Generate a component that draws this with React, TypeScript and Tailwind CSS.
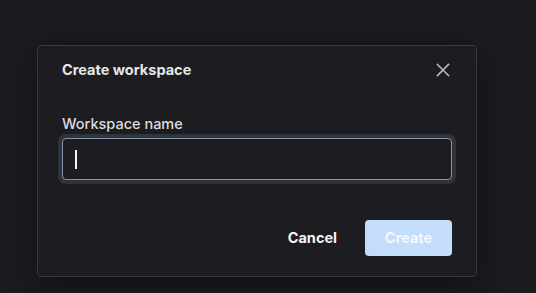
import React from "react";

export default function App() {
  return (
    <div
      className="w-[536px] h-[293px] bg-[#1b1b1f] overflow-hidden"
      style={{ fontFamily: "Inter, 'Open Sans', sans-serif" }}
    >
      <div className="pt-[45px] pl-[37px]">
        <div className="w-[440px] h-[232px] box-border border border-[#38383d] rounded-[4px] bg-[#1d1d21] shadow-[0_10px_30px_rgba(0,0,0,0.35)] px-[24px] pt-[12px] flex flex-col">
          <div className="h-[24px] flex items-center justify-between">
            <span className="text-[14.5px] font-bold text-[#e6e6e8]">
              Create workspace
            </span>
            <svg
              width="24"
              height="24"
              viewBox="0 0 24 24"
              className="mr-[-3px]"
              fill="none"
              stroke="#b8b8bc"
              strokeWidth="1.6"
              strokeLinecap="square"
            >
              <path d="M6.5 6.5 L17.5 17.5 M17.5 6.5 L6.5 17.5" />
            </svg>
          </div>
          <div className="mt-[32px] h-[20px] flex items-center text-[14.5px] font-medium text-[#dcdcdf]">
            Workspace name
          </div>
          <div className="mt-[4px] h-[42px] box-border border border-[#8797ab] rounded-[4px] bg-[#1d1d21] shadow-[0_0_0_4px_#2f343b] flex items-center pl-[12px]">
            <div className="w-[1.5px] h-[19px] bg-[#f2f2f2]" />
          </div>
          <div className="mt-[40px] flex justify-end items-center gap-[12px]">
            <button className="h-[36px] px-[16px] text-[14.5px] font-bold text-[#f4f4f6] bg-transparent rounded-[4px]">
              Cancel
            </button>
            <button className="h-[36px] w-[87px] text-[14.5px] font-bold text-[#f3f8ff] bg-[#c3ddfb] rounded-[4px]">
              Create
            </button>
          </div>
        </div>
      </div>
    </div>
  );
}
